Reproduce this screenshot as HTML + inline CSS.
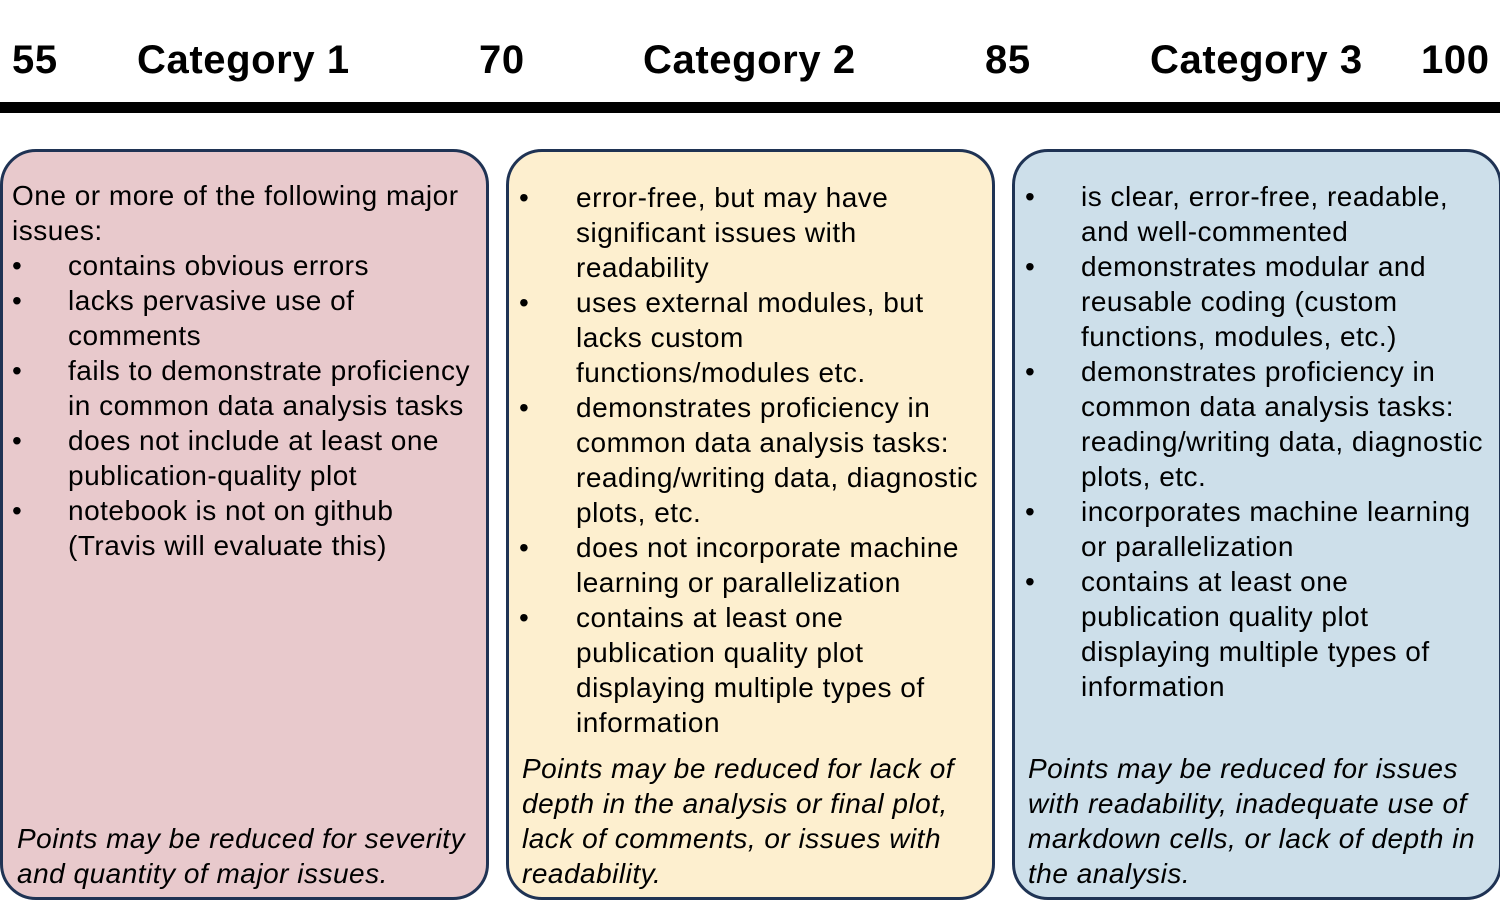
<!DOCTYPE html>
<html><head><style>
body{margin:0;width:1500px;height:900px;overflow:hidden;background:#fff;font-family:"Liberation Sans",sans-serif;position:relative}
.h{position:absolute;top:36px;font-size:40px;font-weight:bold;line-height:48px;color:#000;letter-spacing:0.6px}
.bar{position:absolute;left:0;top:102px;width:1500px;height:11px;background:#000}
.box{position:absolute;top:149px;height:751px;border:3px solid #1f3354;border-radius:36px;box-sizing:border-box}
.l{position:absolute;font-size:28px;letter-spacing:0.5px;line-height:35px;white-space:nowrap;color:#000;margin-top:1px}
.i{font-style:italic}
</style></head><body>
<div class="h" style="left:12px">55</div>
<div class="h" style="left:137px">Category 1</div>
<div class="h" style="left:479px">70</div>
<div class="h" style="left:643px">Category 2</div>
<div class="h" style="left:985px">85</div>
<div class="h" style="left:1150px">Category 3</div>
<div class="h" style="left:1421px">100</div>
<div class="bar"></div>
<div class="box" style="left:0;width:489px;background:#e8c9cc"></div>
<div class="box" style="left:506px;width:489px;background:#fdefcf"></div>
<div class="box" style="left:1012px;width:490px;background:#cddfea"></div>

<div class="l" style="left:12px;top:177px">One or more of the following major</div>
<div class="l" style="left:12px;top:212px">issues:</div>
<div class="l" style="left:12px;top:247px">•</div><div class="l" style="left:68px;top:247px">contains obvious errors</div>
<div class="l" style="left:12px;top:282px">•</div><div class="l" style="left:68px;top:282px">lacks pervasive use of</div>
<div class="l" style="left:68px;top:317px">comments</div>
<div class="l" style="left:12px;top:352px">•</div><div class="l" style="left:68px;top:352px">fails to demonstrate proficiency</div>
<div class="l" style="left:68px;top:387px">in common data analysis tasks</div>
<div class="l" style="left:12px;top:422px">•</div><div class="l" style="left:68px;top:422px">does not include at least one</div>
<div class="l" style="left:68px;top:457px">publication-quality plot</div>
<div class="l" style="left:12px;top:492px">•</div><div class="l" style="left:68px;top:492px">notebook is not on github</div>
<div class="l" style="left:68px;top:527px">(Travis will evaluate this)</div>
<div class="l i" style="left:17px;top:820px">Points may be reduced for severity</div>
<div class="l i" style="left:17px;top:855px">and quantity of major issues.</div>

<div class="l" style="left:519px;top:179px">•</div><div class="l" style="left:576px;top:179px">error-free, but may have</div>
<div class="l" style="left:576px;top:214px">significant issues with</div>
<div class="l" style="left:576px;top:249px">readability</div>
<div class="l" style="left:519px;top:284px">•</div><div class="l" style="left:576px;top:284px">uses external modules, but</div>
<div class="l" style="left:576px;top:319px">lacks custom</div>
<div class="l" style="left:576px;top:354px">functions/modules etc.</div>
<div class="l" style="left:519px;top:389px">•</div><div class="l" style="left:576px;top:389px">demonstrates proficiency in</div>
<div class="l" style="left:576px;top:424px">common data analysis tasks:</div>
<div class="l" style="left:576px;top:459px">reading/writing data, diagnostic</div>
<div class="l" style="left:576px;top:494px">plots, etc.</div>
<div class="l" style="left:519px;top:529px">•</div><div class="l" style="left:576px;top:529px">does not incorporate machine</div>
<div class="l" style="left:576px;top:564px">learning or parallelization</div>
<div class="l" style="left:519px;top:599px">•</div><div class="l" style="left:576px;top:599px">contains at least one</div>
<div class="l" style="left:576px;top:634px">publication quality plot</div>
<div class="l" style="left:576px;top:669px">displaying multiple types of</div>
<div class="l" style="left:576px;top:704px">information</div>
<div class="l i" style="left:522px;top:750px">Points may be reduced for lack of</div>
<div class="l i" style="left:522px;top:785px">depth in the analysis or final plot,</div>
<div class="l i" style="left:522px;top:820px">lack of comments, or issues with</div>
<div class="l i" style="left:522px;top:855px">readability.</div>

<div class="l" style="left:1025px;top:178px">•</div><div class="l" style="left:1081px;top:178px">is clear, error-free, readable,</div>
<div class="l" style="left:1081px;top:213px">and well-commented</div>
<div class="l" style="left:1025px;top:248px">•</div><div class="l" style="left:1081px;top:248px">demonstrates modular and</div>
<div class="l" style="left:1081px;top:283px">reusable coding (custom</div>
<div class="l" style="left:1081px;top:318px">functions, modules, etc.)</div>
<div class="l" style="left:1025px;top:353px">•</div><div class="l" style="left:1081px;top:353px">demonstrates proficiency in</div>
<div class="l" style="left:1081px;top:388px">common data analysis tasks:</div>
<div class="l" style="left:1081px;top:423px">reading/writing data, diagnostic</div>
<div class="l" style="left:1081px;top:458px">plots, etc.</div>
<div class="l" style="left:1025px;top:493px">•</div><div class="l" style="left:1081px;top:493px">incorporates machine learning</div>
<div class="l" style="left:1081px;top:528px">or parallelization</div>
<div class="l" style="left:1025px;top:563px">•</div><div class="l" style="left:1081px;top:563px">contains at least one</div>
<div class="l" style="left:1081px;top:598px">publication quality plot</div>
<div class="l" style="left:1081px;top:633px">displaying multiple types of</div>
<div class="l" style="left:1081px;top:668px">information</div>
<div class="l i" style="left:1028px;top:750px">Points may be reduced for issues</div>
<div class="l i" style="left:1028px;top:785px">with readability, inadequate use of</div>
<div class="l i" style="left:1028px;top:820px">markdown cells, or lack of depth in</div>
<div class="l i" style="left:1028px;top:855px">the analysis.</div>
</body></html>
